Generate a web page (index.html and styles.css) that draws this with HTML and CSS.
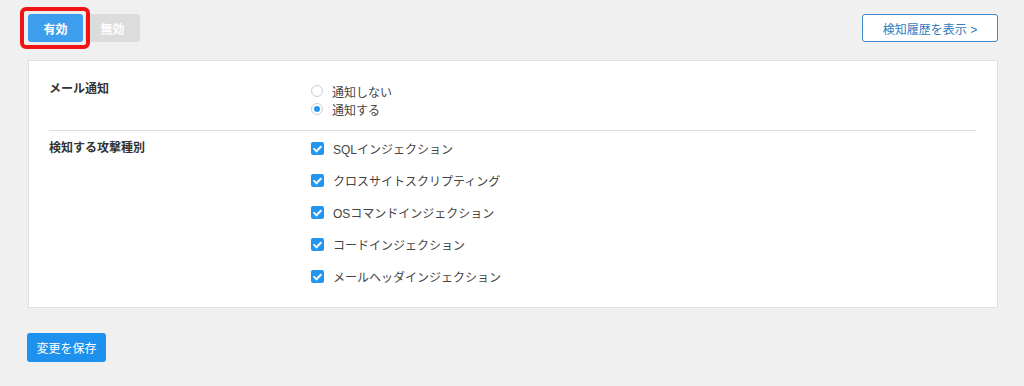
FILE: index.html
```html
<!DOCTYPE html>
<html lang="ja">
<head>
    <meta charset="UTF-8">
    <meta name="viewport" content="width=device-width, initial-scale=1.0">
    <title>攻撃検知設定</title>
    <link rel="stylesheet" href="styles.css">
</head>
<body>
    <div class="toolbar">
        <div class="toggle-group">
            <button class="toggle active">有効</button>
            <button class="toggle">無効</button>
            <span class="highlight"></span>
        </div>
        <a href="#" class="history-button">検知履歴を表示 &gt;</a>
    </div>

    <div class="panel">
        <div class="row">
            <div class="row-label">メール通知</div>
            <div class="options radios">
                <label class="option"><span class="radio"></span>通知しない</label>
                <label class="option"><span class="radio checked"></span>通知する</label>
            </div>
        </div>
        <div class="row row-attacks">
            <div class="row-label">検知する攻撃種別</div>
            <div class="options checks">
                <label class="option"><span class="checkbox"></span>SQLインジェクション</label>
                <label class="option"><span class="checkbox"></span>クロスサイトスクリプティング</label>
                <label class="option"><span class="checkbox"></span>OSコマンドインジェクション</label>
                <label class="option"><span class="checkbox"></span>コードインジェクション</label>
                <label class="option"><span class="checkbox"></span>メールヘッダインジェクション</label>
            </div>
        </div>
    </div>

    <button class="save-button">変更を保存</button>
</body>
</html>
```

FILE: styles.css
```css
body {
    font-family: "Liberation Sans", "Noto Sans CJK JP", sans-serif;
    font-size: 12px;
    background-color: #f0f0f0;
    color: #333;
    margin: 0;
    padding: 14px 26px 0 28px;
}
button {
    font-family: inherit;
    cursor: pointer;
}
.toolbar {
    display: flex;
    justify-content: space-between;
    align-items: center;
    height: 28px;
}
.toggle-group {
    position: relative;
    display: flex;
    gap: 2px;
}
.toggle {
    width: 55px;
    height: 28px;
    border: none;
    border-radius: 3px;
    background-color: #dcdcdc;
    color: #fff;
    font-size: 12px;
    font-weight: bold;
    padding: 0;
}
.toggle.active {
    background-color: #3d9eee;
}
.highlight {
    position: absolute;
    left: -8px;
    top: -7px;
    width: 62px;
    height: 34px;
    border: 4px solid #f01414;
    border-radius: 6px;
    pointer-events: none;
}
.history-button {
    display: flex;
    align-items: center;
    justify-content: center;
    box-sizing: border-box;
    width: 136px;
    height: 28px;
    border: 1px solid #3f8acb;
    border-radius: 3px;
    background-color: #fff;
    color: #2f7cc0;
    text-decoration: none;
    font-size: 12px;
}
.panel {
    margin-top: 18px;
    background-color: #fff;
    border: 1px solid #e0e0e0;
    padding: 0 21px 0 20px;
}
.row {
    display: flex;
    padding: 21px 0 12px;
    border-bottom: 1px solid #dddddd;
}
.row-attacks {
    border-bottom: none;
    padding: 1px 0 15px;
}
.row-label {
    width: 262px;
    font-weight: bold;
    color: #333;
    line-height: 14px;
}
.row-attacks .row-label {
    line-height: 32px;
}
.options {
    display: flex;
    flex-direction: column;
    color: #444;
}
.option {
    display: flex;
    align-items: center;
}
.radios .option {
    height: 18px;
    gap: 9px;
}
.checks .option {
    height: 32px;
    gap: 9px;
}
.radio {
    box-sizing: border-box;
    width: 12px;
    height: 12px;
    border: 1px solid #cfcfcf;
    border-radius: 50%;
    background-color: #fff;
    position: relative;
}
.radio.checked::after {
    content: "";
    position: absolute;
    left: 2px;
    top: 2px;
    width: 6px;
    height: 6px;
    border-radius: 50%;
    background-color: #2196f3;
}
.checkbox {
    box-sizing: border-box;
    width: 13px;
    height: 13px;
    border-radius: 2px;
    background-color: #2196f3;
    position: relative;
}
.checkbox::after {
    content: "";
    position: absolute;
    left: 4px;
    top: 2px;
    width: 3px;
    height: 6px;
    border: solid #fff;
    border-width: 0 2px 2px 0;
    transform: rotate(45deg);
}
.save-button {
    margin-top: 25px;
    margin-left: -1px;
    width: 79px;
    height: 29px;
    border: none;
    border-radius: 3px;
    background-color: #1e90ee;
    color: #fff;
    font-size: 12px;
    padding: 0;
}
```
